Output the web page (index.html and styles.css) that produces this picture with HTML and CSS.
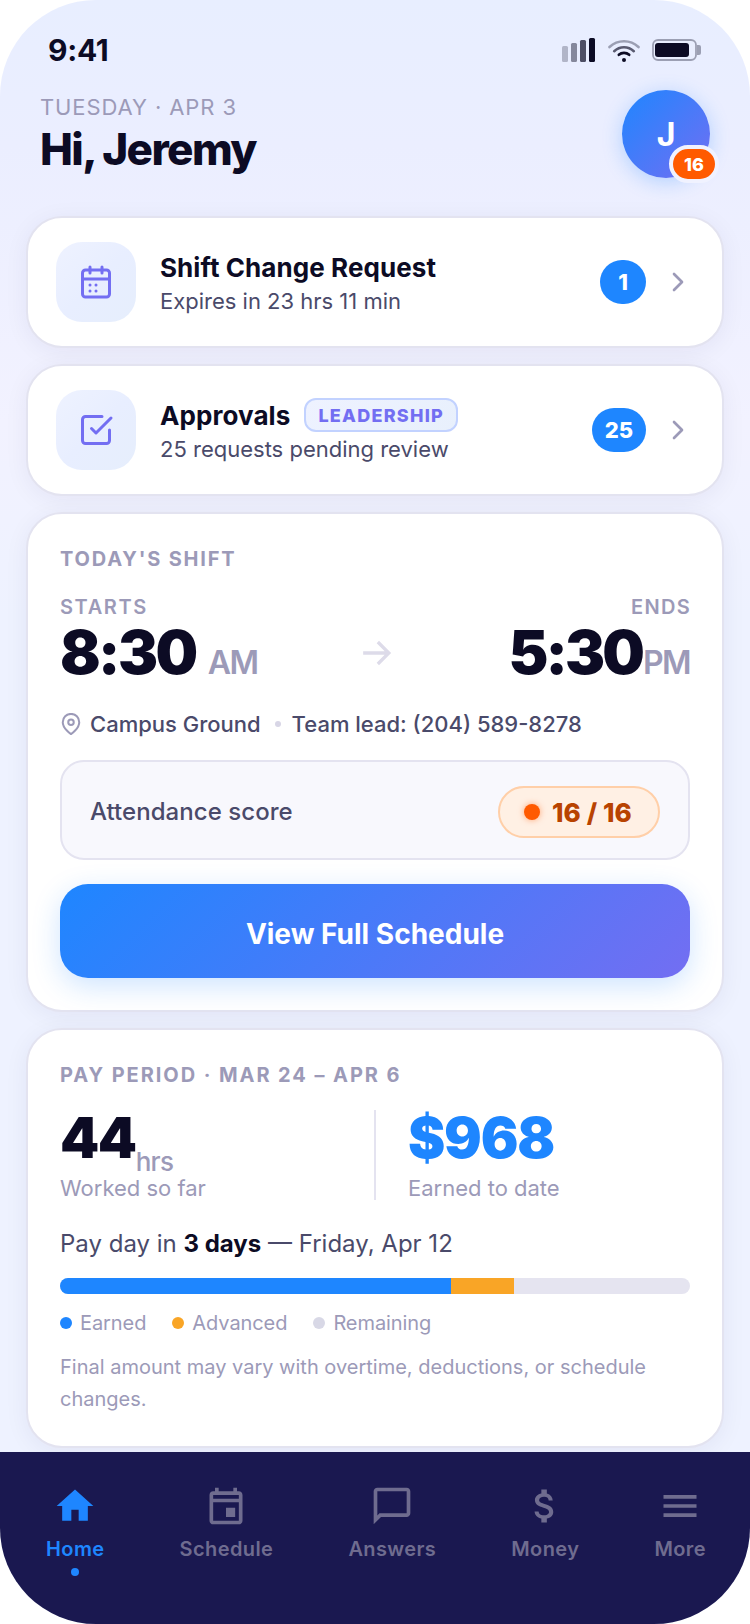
FILE: index.html
```html
<!DOCTYPE html>
<html lang="en">
<head>
    <meta charset="UTF-8">
    <meta name="viewport" content="width=device-width, initial-scale=1.0">
    <title>Home</title>
    <link rel="stylesheet" href="styles.css">
</head>
<body>
<div class="phone">

    <!-- Status bar -->
    <div class="status-bar">
        <span class="time">9:41</span>
        <div class="status-icons">
            <svg class="signal" width="34" height="24" viewBox="0 0 34 24" fill="#0c0b24">
                <rect x="0" y="8" width="6" height="16" rx="1.5" opacity=".25"/>
                <rect x="9" y="5" width="6" height="19" rx="1.5" opacity=".45"/>
                <rect x="18" y="2" width="6" height="22" rx="1.5" opacity=".7"/>
                <rect x="27" y="0" width="6" height="24" rx="1.5"/>
            </svg>
            <svg class="wifi" width="32" height="24" viewBox="0 0 32 24" fill="none" stroke="#0c0b24" stroke-width="2.6" stroke-linecap="round">
                <path d="M1.5 9C9.8 1.4 22.2 1.4 30.5 9" opacity=".35"/>
                <path d="M6.2 13.2C11.8 8 20.2 8 25.8 13.2" opacity=".65"/>
                <path d="M10.8 16.8C13.7 14.2 18.3 14.2 21.2 16.8"/>
                <circle cx="16" cy="22" r="2" fill="#0c0b24" stroke="none"/>
            </svg>
            <svg class="battery" width="49" height="24" viewBox="0 0 49 24">
                <rect x="1" y="2" width="43" height="20" rx="5" fill="none" stroke="#0c0b24" stroke-width="1.8" opacity=".35"/>
                <rect x="3" y="5" width="34" height="14" rx="3" fill="#0c0b24"/>
                <path d="M45 7h2a2 2 0 0 1 2 2v6a2 2 0 0 1-2 2h-2z" fill="#0c0b24" opacity=".35"/>
            </svg>
        </div>
    </div>

    <header class="header">
        <div>
            <p class="date">TUESDAY · APR 3</p>
            <h1>Hi, Jeremy</h1>
        </div>
        <div class="avatar">J<span class="avatar-badge">16</span></div>
    </header>

    <main class="content">
        <section class="card row-card">
            <div class="tile">
                <svg width="36" height="36" viewBox="0 0 24 24" fill="none" stroke="currentColor" stroke-width="2" stroke-linecap="round" stroke-linejoin="round">
                    <rect x="3" y="4" width="18" height="18" rx="2"/>
                    <path d="M16 2v4M8 2v4M3 10h18M8 14h.01M12 14h.01M8 18h.01M12 18h.01"/>
                </svg>
            </div>
            <div class="row-text">
                <h2>Shift Change Request</h2>
                <p>Expires in 23 hrs 11 min</p>
            </div>
            <span class="count">1</span>
            <svg class="chevron" width="32" height="32" viewBox="0 0 24 24"><path d="M9 18l6-6-6-6"/></svg>
        </section>

        <section class="card row-card">
            <div class="tile">
                <svg width="36" height="36" viewBox="0 0 24 24" fill="none" stroke="currentColor" stroke-width="2" stroke-linecap="round" stroke-linejoin="round">
                    <path d="M9 11l3 3L22 4"/>
                    <path d="M21 12v7a2 2 0 0 1-2 2H5a2 2 0 0 1-2-2V5a2 2 0 0 1 2-2h11"/>
                </svg>
            </div>
            <div class="row-text">
                <h2>Approvals <span class="tag">LEADERSHIP</span></h2>
                <p>25 requests pending review</p>
            </div>
            <span class="count">25</span>
            <svg class="chevron" width="32" height="32" viewBox="0 0 24 24"><path d="M9 18l6-6-6-6"/></svg>
        </section>

        <!-- Today's shift -->
        <section class="card shift-card">
            <h3 class="eyebrow">TODAY'S SHIFT</h3>
            <div class="shift-times">
                <div class="starts">
                    <p class="time-label">STARTS</p>
                    <p class="big-time">8:30 <span>AM</span></p>
                </div>
                <svg class="arrow" width="44" height="44" viewBox="0 0 24 24"><path d="M5 12h14M13 6l6 6-6 6"/></svg>
                <div class="ends">
                    <p class="time-label">ENDS</p>
                    <p class="big-time">5:30<span>PM</span></p>
                </div>
            </div>
            <div class="location">
                <svg width="22" height="22" viewBox="0 0 24 24" fill="none" stroke="#9c9ab8" stroke-width="2.2">
                    <path d="M21 10c0 7-9 13-9 13S3 17 3 10a9 9 0 0 1 18 0z"/>
                    <circle cx="12" cy="10" r="3"/>
                </svg>
                <span>Campus Ground</span>
                <i class="sep"></i>
                <span>Team lead: (204) 589-8278</span>
            </div>
            <div class="score">
                <span>Attendance score</span>
                <span class="score-pill"><i></i><b>16 / 16</b></span>
            </div>
            <button class="cta" type="button">View Full Schedule</button>
        </section>

        <!-- Pay period -->
        <section class="card pay-card">
            <h3 class="eyebrow">PAY PERIOD · MAR 24 – APR 6</h3>
            <div class="stats">
                <div class="stat">
                    <p class="stat-value">44<span>hrs</span></p>
                    <p class="stat-label">Worked so far</p>
                </div>
                <div class="stat earned">
                    <p class="stat-value">$968</p>
                    <p class="stat-label">Earned to date</p>
                </div>
            </div>
            <p class="payday">Pay day in <strong>3 days</strong> — Friday, Apr 12</p>
            <div class="progress">
                <div class="bar-earned" style="width: 62%"></div>
                <div class="bar-advanced" style="width: 10%"></div>
            </div>
            <div class="legend">
                <span><i class="blue"></i>Earned</span>
                <span><i class="orange"></i>Advanced</span>
                <span><i class="grey"></i>Remaining</span>
            </div>
            <p class="note">Final amount may vary with overtime, deductions, or schedule changes.</p>
        </section>
    </main>

    <nav class="tab-bar">
        <a class="tab active">
            <svg width="44" height="44" viewBox="0 0 24 24"><path d="M10 20v-6h4v6h5v-8h3L12 3 2 12h3v8z"/></svg>
            <span>Home</span>
        </a>
        <a class="tab">
            <svg width="44" height="44" viewBox="0 0 24 24"><path d="M19 4h-1V2h-2v2H8V2H6v2H5c-1.11 0-1.99.9-1.99 2L3 20c0 1.1.89 2 2 2h14c1.1 0 2-.9 2-2V6c0-1.1-.9-2-2-2zm0 16H5V10h14v10zm0-12H5V6h14v2zm-7 5h5v5h-5v-5z"/></svg>
            <span>Schedule</span>
        </a>
        <a class="tab">
            <svg width="44" height="44" viewBox="0 0 24 24"><path d="M20 2H4c-1.1 0-2 .9-2 2v18l4-4h14c1.1 0 2-.9 2-2V4c0-1.1-.9-2-2-2zm0 14H5.17L4 17.17V4h16v12z"/></svg>
            <span>Answers</span>
        </a>
        <a class="tab">
            <svg width="44" height="44" viewBox="0 0 24 24"><path d="M11.8 10.9c-2.27-.59-3-1.2-3-2.15 0-1.09 1.01-1.85 2.7-1.85 1.78 0 2.44.85 2.5 2.1h2.21c-.07-1.72-1.12-3.3-3.21-3.81V3h-3v2.16c-1.94.42-3.5 1.68-3.5 3.61 0 2.31 1.91 3.46 4.7 4.13 2.5.6 3 1.48 3 2.41 0 .69-.49 1.79-2.7 1.79-2.06 0-2.87-.92-2.98-2.1h-2.2c.12 2.19 1.76 3.42 3.68 3.83V21h3v-2.15c1.95-.37 3.5-1.5 3.5-3.55 0-2.84-2.43-3.81-4.7-4.4z"/></svg>
            <span>Money</span>
        </a>
        <a class="tab">
            <svg width="44" height="44" viewBox="0 0 24 24"><path d="M3 18h18v-2H3v2zm0-5h18v-2H3v2zm0-7v2h18V6H3z"/></svg>
            <span>More</span>
        </a>
    </nav>
</div>
</body>
</html>
```

FILE: styles.css
```css
* {
    box-sizing: border-box;
    margin: 0;
    padding: 0;
}
body {
    background: #fff;
    font-family: Inter, "Liberation Sans", sans-serif;
    color: #0c0b24;
}
svg {
    display: block;
    flex-shrink: 0;
}
.phone {
    width: 750px;
    height: 1624px;
    border-radius: 96px;
    overflow: hidden;
    display: flex;
    flex-direction: column;
    background: linear-gradient(180deg, #e8eeff 0%, #ebeeff 9%, #f2f2ff 26%, #eef2ff 38%, #eef2ff 100%);
}

/* Status bar */
.status-bar {
    height: 90px;
    padding: 10px 49px 0 48px;
    display: flex;
    align-items: center;
    justify-content: space-between;
}
.time {
    font-size: 30px;
    font-weight: 700;
    letter-spacing: -0.3px;
}
.status-icons {
    display: flex;
    gap: 12px;
}

/* Header */
.header {
    height: 126px;
    padding: 0 40px;
    display: flex;
    justify-content: space-between;
}
.date {
    margin-top: 4px;
    font-size: 22px;
    line-height: 27px;
    letter-spacing: 0.9px;
    color: #9c9ab8;
}
h1 {
    font-size: 44px;
    line-height: 53px;
    font-weight: 800;
    letter-spacing: -1.6px;
    margin-top: 2px;
}
.avatar {
    position: relative;
    width: 88px;
    height: 88px;
    border-radius: 50%;
    background: linear-gradient(135deg, #1e86ff, #736ef2);
    box-shadow: 0 4px 20px rgba(30, 134, 255, 0.28);
    color: #fff;
    font-size: 32px;
    font-weight: 700;
    display: flex;
    align-items: center;
    justify-content: center;
}
.avatar-badge {
    position: absolute;
    right: -9px;
    bottom: -5px;
    min-width: 50px;
    height: 38px;
    border: 4px solid #f0f2ff;
    border-radius: 19px;
    background: #ff5a00;
    font-size: 18px;
    font-weight: 800;
    line-height: 31px;
    text-align: center;
}

/* Cards */
.content {
    height: 1236px;
    padding: 0 26px;
    display: flex;
    flex-direction: column;
    gap: 16px;
}
.card {
    flex-shrink: 0;
    background: #fff;
    border: 2px solid #e3e3f0;
    border-radius: 36px;
    box-shadow: 0 4px 24px rgba(26, 24, 80, 0.06);
}
.row-card {
    height: 132px;
    padding: 0 28px;
    display: flex;
    align-items: center;
}
.tile {
    width: 80px;
    height: 80px;
    margin-right: 24px;
    border-radius: 26px;
    background: linear-gradient(135deg, #eef2ff, #e8eeff 50%, #e6eefc);
    color: #736ef2;
    display: flex;
    align-items: center;
    justify-content: center;
}
.row-text {
    flex: 1;
    padding-top: 3px;
}
h2 {
    height: 34px;
    font-size: 26px;
    line-height: 34px;
    font-weight: 700;
    letter-spacing: 0.08px;
    display: flex;
    align-items: center;
}
.row-text p {
    font-size: 22px;
    line-height: 30px;
    margin-top: 1px;
    color: #4a4a6a;
}
.tag {
    height: 34px;
    margin: -2px 0 0 14px;
    padding: 0 12px;
    border: 2px solid #c2d2ff;
    border-radius: 12px;
    background: linear-gradient(135deg, #eef2ff, #e8f0fc);
    color: #736ef2;
    font-size: 18px;
    font-weight: 800;
    line-height: 31px;
    letter-spacing: 1.25px;
}
.count {
    min-width: 46px;
    height: 44px;
    margin-right: 16px;
    padding: 0 13px;
    border-radius: 22px;
    background: #1e86ff;
    color: #fff;
    font-size: 22px;
    font-weight: 800;
    line-height: 45px;
    text-align: center;
}
.chevron {
    fill: none;
    stroke: #9c9ab8;
    stroke-width: 2;
    stroke-linecap: round;
    stroke-linejoin: round;
}

/* Today's shift */
.shift-card {
    height: 500px;
    padding: 33px 32px 32px;
}
.eyebrow {
    font-size: 20px;
    line-height: 24px;
    font-weight: 700;
    letter-spacing: 1.8px;
    color: #9c9ab8;
}
.shift-times {
    margin-top: 24px;
    display: flex;
}
.starts,
.ends {
    flex: 1;
}
.time-label {
    font-size: 20px;
    line-height: 24px;
    font-weight: 600;
    letter-spacing: 1.6px;
    color: #9c9ab8;
}
.big-time {
    font-size: 60px;
    line-height: 66px;
    font-weight: 900;
    letter-spacing: -2.6px;
}
.big-time span {
    font-size: 32px;
    font-weight: 600;
    letter-spacing: -1.6px;
    color: #9c9ab8;
}
.starts .big-time span {
    margin-left: 3px;
}
.ends {
    text-align: right;
}
.ends .time-label {
    margin-right: -1px;
    letter-spacing: 1.3px;
}
.ends .big-time {
    letter-spacing: -2.9px;
}
.ends .big-time span {
    margin-left: 1px;
}
.arrow {
    margin: 36px -1px 0 1px;
    fill: none;
    stroke: #dddbe9;
    stroke-width: 1.8;
}
.location {
    height: 30px;
    margin-top: 13px;
    display: flex;
    align-items: center;
    font-size: 22px;
    font-weight: 500;
    color: #4a4a6a;
}
.location svg {
    margin-right: 8px;
}
.sep {
    width: 6px;
    height: 6px;
    margin: 0 11px 0 14px;
    border-radius: 50%;
    background: #d8d6e6;
}
.score {
    height: 100px;
    margin-top: 21px;
    padding: 3px 28px 0;
    border: 2px solid #e4e3f0;
    border-radius: 24px;
    background: #f8f8fd;
    display: flex;
    align-items: center;
    justify-content: space-between;
    font-size: 24px;
    font-weight: 500;
    letter-spacing: 0.05px;
    color: #4a4a6a;
}
.score-pill {
    width: 162px;
    height: 52px;
    padding-left: 24px;
    border: 2px solid #ffcfa8;
    border-radius: 26px;
    background: #fff0e4;
    display: flex;
    align-items: center;
    color: #b84300;
}
.score-pill b {
    padding-top: 2px;
    font-size: 26px;
    font-weight: 800;
    letter-spacing: 0.1px;
    line-height: 34px;
    white-space: nowrap;
}
.score-pill i {
    width: 16px;
    height: 16px;
    margin-right: 12px;
    border-radius: 50%;
    background: #ff5a00;
    box-shadow: 0 0 6px rgba(255, 90, 0, 0.5);
}
.cta {
    display: block;
    width: 100%;
    height: 94px;
    margin-top: 24px;
    padding-top: 5px;
    border: 0;
    border-radius: 28px;
    background: linear-gradient(135deg, #1e86ff, #736ef2);
    box-shadow: 0 8px 28px rgba(30, 134, 255, 0.22);
    color: #fff;
    font-family: inherit;
    font-size: 28px;
    font-weight: 700;
}

/* Pay period */
.pay-card {
    height: 420px;
    padding: 33px 32px 32px;
}
.pay-card .eyebrow {
    letter-spacing: 1.93px;
}
.stats {
    height: 90px;
    margin-top: 23px;
    display: flex;
}
.stat {
    width: 314px;
}
.earned {
    width: auto;
    flex: 1;
    padding-left: 32px;
    border-left: 2px solid #e4e3f0;
}
.earned .stat-value {
    color: #1e86ff;
    letter-spacing: -1.2px;
}
.stat-value {
    height: 63px;
    font-size: 56px;
    line-height: 56px;
    font-weight: 900;
    letter-spacing: -1.5px;
}
.stat-value span {
    position: relative;
    top: 13px;
    font-size: 26px;
    font-weight: 500;
    letter-spacing: -0.7px;
    color: #9c9ab8;
}
.stat-label {
    font-size: 22px;
    line-height: 30px;
    color: #9c9ab8;
}
.payday {
    margin-top: 28px;
    font-size: 24px;
    line-height: 32px;
    color: #4a4a6a;
}
.payday strong {
    color: #0c0b24;
}
.progress {
    height: 16px;
    margin-top: 18px;
    border-radius: 8px;
    overflow: hidden;
    background: #e5e4f0;
    display: flex;
}
.bar-earned {
    background: #1e86ff;
}
.bar-advanced {
    background: #f9a526;
}
.legend {
    height: 24px;
    margin-top: 17px;
    display: flex;
    gap: 26px;
    font-size: 20px;
    letter-spacing: -0.08px;
    color: #9c9ab8;
}
.legend span {
    display: flex;
    align-items: center;
}
.legend i {
    width: 12px;
    height: 12px;
    margin-right: 8px;
    border-radius: 50%;
}
.blue {
    background: #1e86ff;
}
.orange {
    background: #f9a526;
}
.grey {
    background: #d8d8e6;
}
.note {
    margin-top: 16px;
    font-size: 20px;
    line-height: 32px;
    color: #9c9ab8;
}

/* Tab bar */
.tab-bar {
    height: 172px;
    padding: 32px 44px 0 46px;
    background: #1a1850;
    display: flex;
    justify-content: space-between;
}
.tab {
    display: flex;
    flex-direction: column;
    align-items: center;
    font-size: 20px;
    line-height: 26px;
    font-weight: 600;
    letter-spacing: 0.4px;
    color: #6f6c8f;
}
.tab svg {
    margin-bottom: 8px;
    fill: currentColor;
}
.active {
    color: #1e86ff;
}
.active::after {
    content: "";
    width: 8px;
    height: 8px;
    margin-top: 6px;
    border-radius: 50%;
    background: #1e86ff;
}
```
